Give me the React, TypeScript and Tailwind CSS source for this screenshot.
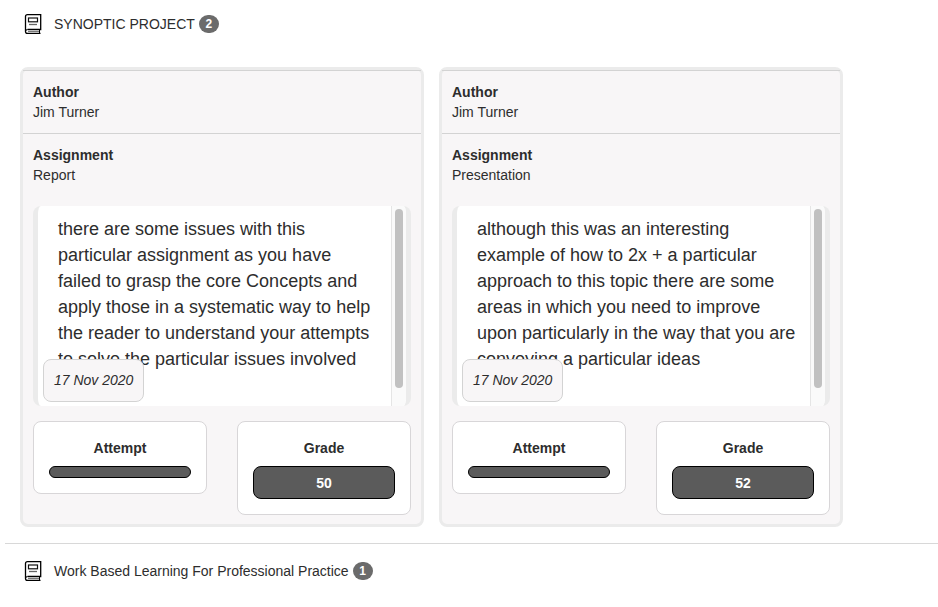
type Submission = {
  id: string;
  author: string;
  assignment: string;
  comment: string;
  date: string;
  grade: number;
};

const submissions: Submission[] = [
  {
    id: "report",
    author: "Jim Turner",
    assignment: "Report",
    comment:
      "there are some issues with this particular assignment as you have failed to grasp the core Concepts and apply those in a systematic way to help the reader to understand your attempts to solve the particular issues involved",
    date: "17 Nov 2020",
    grade: 50,
  },
  {
    id: "presentation",
    author: "Jim Turner",
    assignment: "Presentation",
    comment:
      "although this was an interesting example of how to 2x + a particular approach to this topic there are some areas in which you need to improve upon particularly in the way that you are conveying a particular ideas",
    date: "17 Nov 2020",
    grade: 52,
  },
];

function BookIcon() {
  return (
    <svg width="20" height="22" viewBox="0 0 20 22" fill="none" aria-hidden="true">
      <path d="M4.5 16.5H17.7V1.6H4.5Q2.5 1.6 2.5 3.6V18.5Q2.5 20.4 4.5 20.4H17.5" stroke="#000" strokeWidth="1.3" />
      <path d="M2.5 18.5Q2.5 16.5 4.5 16.5M16.5 16.5V20.4" stroke="#000" />
      <path d="M5 18.5H16" stroke="#777" />
      <rect x="5.5" y="5" width="9" height="3.8" stroke="#111" strokeWidth="1.2" />
      <path d="M6 11.5H14" stroke="#666" strokeWidth="1.3" />
    </svg>
  );
}

function ModuleHeading({ title, count }: { title: string; count: number }) {
  return (
    <h2 className="flex h-6 items-center">
      <BookIcon />
      <span className="ml-[11px]">{title}</span>
      <span className="ml-1 flex h-[18px] w-5 items-center justify-center rounded-full bg-[#6b6b6b] text-xs font-bold text-white">
        {count}
      </span>
    </h2>
  );
}

function Field({ label, value }: { label: string; value: string }) {
  return (
    <div className="border-t border-[#d3d3d3] px-2.5 py-[11px]">
      <dt className="font-bold">{label}</dt>
      <dd>{value}</dd>
    </div>
  );
}

function Stat({ label, value }: { label: string; value?: number }) {
  return (
    <div className="w-[174px] rounded-lg border border-[#d8d6d8] bg-white px-[15px] pt-4 pb-[15px] text-center leading-[21px] font-bold">
      <div>{label}</div>
      <div className="mt-[7px] rounded-lg border border-black bg-[#5b5b5b] pt-1.5 pb-1 text-white">{value}</div>
    </div>
  );
}

function SubmissionCard({ item }: { item: Submission }) {
  return (
    <article className="w-[404px] rounded-lg border-[3px] border-[#ebebeb] bg-[#f8f6f7]">
      <dl>
        <Field label="Author" value={item.author} />
        <Field label="Assignment" value={item.assignment} />
      </dl>
      <div className="relative mx-2.5 mt-2.5 flex h-[200px] overflow-hidden rounded-lg border-x-[5px] border-[#ebebeb] bg-white">
        <p className="flex-1 pt-2.5 pr-[13px] pl-5 text-lg leading-[26px]">{item.comment}</p>
        <div className="w-[15px] border-l border-[#e5e5e5] bg-[#fafafa] px-[3px] pt-[3px]">
          <div className="h-[179px] w-2 rounded-full bg-[#c1c1c1]" />
        </div>
        <time className="absolute bottom-1 left-[5px] rounded-lg border border-[#d3d3d3] bg-[#f8f6f7] px-2.5 pt-2.5 pb-[11px] whitespace-nowrap italic">
          {item.date}
        </time>
      </div>
      <div className="mx-2.5 mt-[15px] mb-[9px] flex items-start justify-between">
        <Stat label="Attempt" />
        <Stat label="Grade" value={item.grade} />
      </div>
    </article>
  );
}

export default function App() {
  return (
    <main className="bg-white pt-3 font-['Liberation_Sans',Arial,sans-serif] text-sm leading-5 text-[#2d2d2d]">
      <section className="pl-[23px]">
        <ModuleHeading title="SYNOPTIC PROJECT" count={2} />
      </section>
      <div className="mt-[31px] flex flex-wrap gap-[15px] pl-5">
        {submissions.map((item) => (
          <SubmissionCard key={item.id} item={item} />
        ))}
      </div>
      <hr className="mt-4 ml-[5px] border-[#d8d8d8]" />
      <section className="mt-[15px] pl-[23px]">
        <ModuleHeading title="Work Based Learning For Professional Practice" count={1} />
      </section>
    </main>
  );
}
